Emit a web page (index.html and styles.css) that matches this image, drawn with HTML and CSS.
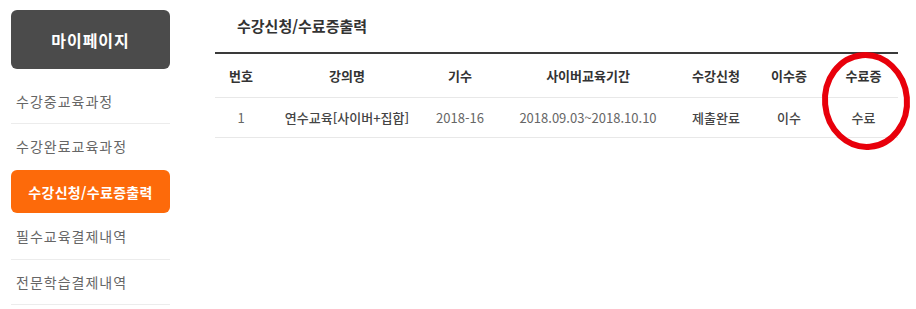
FILE: index.html
```html
<!DOCTYPE html>
<html lang="ko">
<head>
<meta charset="utf-8">
<link rel="stylesheet" href="styles.css">
</head>
<body>
<div class="page">
  <aside class="sidebar">
    <div class="side-title">마이페이지</div>
    <ul class="menu">
      <li class="menu-item line">수강중교육과정</li>
      <li class="menu-item">수강완료교육과정</li>
      <li class="menu-item active">수강신청/수료증출력</li>
      <li class="menu-item line tall">필수교육결제내역</li>
      <li class="menu-item line">전문학습결제내역</li>
    </ul>
  </aside>
  <main class="content">
    <h2 class="page-title">수강신청/수료증출력</h2>
    <div class="table-wrap">
      <table class="list">
        <colgroup>
          <col class="c1"><col class="c2"><col class="c3"><col class="c4"><col class="c5"><col class="c6"><col class="c7">
        </colgroup>
        <thead>
          <tr><th>번호</th><th>강의명</th><th>기수</th><th>사이버교육기간</th><th>수강신청</th><th>이수증</th><th>수료증</th></tr>
        </thead>
        <tbody>
          <tr><td>1</td><td class="strong">연수교육[사이버+집합]</td><td>2018-16</td><td>2018.09.03~2018.10.10</td><td class="strong">제출완료</td><td class="strong">이수</td><td class="strong">수료</td></tr>
        </tbody>
      </table>
      <svg class="circle" width="96" height="104" viewBox="0 0 96 104" aria-hidden="true">
        <ellipse cx="48" cy="52" rx="41" ry="46" fill="none" stroke="#e8000b" stroke-width="6" transform="rotate(-5 48 52)"/>
      </svg>
    </div>
  </main>
</div>
</body>
</html>
```

FILE: styles.css
```css
html, body {
  margin: 0;
  padding: 0;
  background: #ffffff;
}
body {
  font-family: "Noto Sans CJK KR", "Noto Sans", sans-serif;
  color: #555;
}
.page {
  display: flex;
  align-items: flex-start;
  width: 916px;
  height: 309px;
  overflow: hidden;
}
.sidebar {
  width: 159px;
  margin-left: 11px;
  padding-top: 10px;
}
.side-title {
  height: 59px;
  border-radius: 6px;
  background: #4b4b4b;
  color: #fff;
  font-size: 16px;
  font-weight: 700;
  letter-spacing: 1px;
  display: flex;
  align-items: center;
  justify-content: center;
}
.menu {
  list-style: none;
  margin: 10px 0 0;
  padding: 0;
}
.menu-item {
  height: 44px;
  display: flex;
  align-items: center;
  padding-left: 5px;
  font-size: 14px;
  letter-spacing: 1px;
  color: #666;
  box-sizing: border-box;
}
.menu-item.line {
  height: 45px;
  border-bottom: 1px solid #ececec;
}
.menu-item.tall {
  height: 47px;
}
.menu-item.active {
  height: 43px;
  margin-top: 2px;
  border-radius: 6px;
  background: #fd6a0a;
  color: #fff;
  font-weight: 700;
  letter-spacing: 0.3px;
  justify-content: center;
  padding-left: 0;
}
.content {
  margin-left: 45px;
  width: 683px;
}
.page-title {
  margin: 0;
  height: 52px;
  padding: 15px 0 0 22px;
  box-sizing: border-box;
  font-size: 15px;
  font-weight: 700;
  color: #333;
}
.table-wrap {
  position: relative;
}
.list {
  width: 683px;
  border-collapse: collapse;
  table-layout: fixed;
  border-top: 2px solid #3a3a3a;
}
.c1 { width: 52px; }
.c2 { width: 160px; }
.c3 { width: 66px; }
.c4 { width: 190px; }
.c5 { width: 66px; }
.c6 { width: 80px; }
.c7 { width: 69px; }
.list th {
  height: 43px;
  padding: 0;
  font-size: 13px;
  font-weight: 700;
  color: #333;
  border-bottom: 1px solid #e8e8e8;
  text-align: center;
}
.list td {
  height: 39px;
  padding: 0;
  font-size: 13px;
  color: #666;
  text-align: center;
  border-bottom: 1px solid #e8e8e8;
  white-space: nowrap;
}
.list td.strong {
  color: #444;
  font-weight: 500;
}
.circle {
  position: absolute;
  left: 603px;
  top: -3px;
}
```
